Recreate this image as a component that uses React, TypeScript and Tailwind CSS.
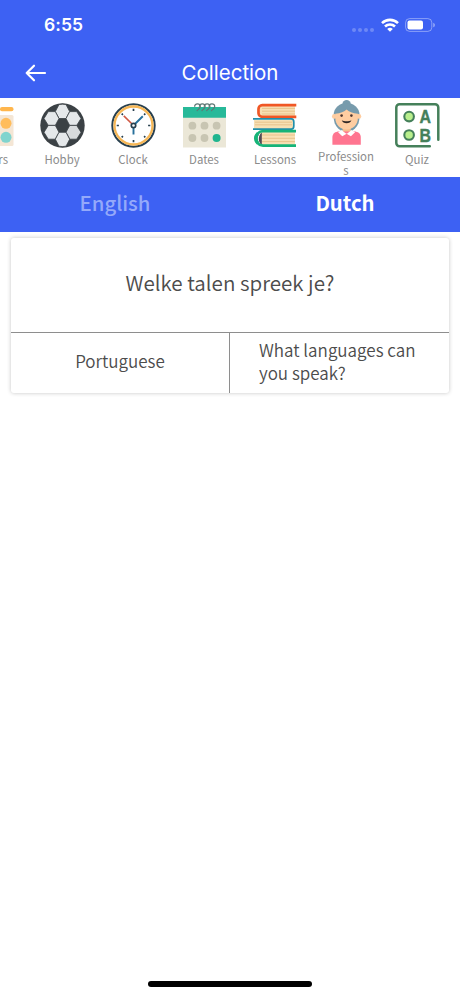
import { useState } from "react";
import type { ReactNode } from "react";

const SoccerIcon = () => (
  <svg viewBox="0 0 45 45" className="size-[45px] shrink-0">
    <circle cx="22.5" cy="22.5" r="22.2" fill="#3b4145" />
    <g fill="#e5e8ea" stroke="#3b4145" strokeWidth="0.8">
      <path d="M19 1.6Q22.5 .8 26 1.6L29.7 8.6 26 15.5H19L15.3 8.6Z" />
      <path d="M8.3 8.6h7l3.7 6.9-3.7 6.9h-7L4 15.5Z" />
      <path d="M29.7 8.6h7l4.3 6.9-4.3 6.9h-7L26 15.5Z" />
      <path d="M8.3 22.4h7l3.7 6.9-3.7 6.9h-7L4 29.3Z" />
      <path d="M29.7 22.4h7l4.3 6.9-4.3 6.9h-7L26 29.3Z" fill="#d8dbdd" />
      <path d="M19 29.3h7l3.7 6.9-3.7 7Q22.5 44 19 43.2l-3.7-7Z" />
    </g>
  </svg>
);

const ClockIcon = () => (
  <svg viewBox="0 0 45 45" className="size-[45px] shrink-0" fill="none">
    <circle cx="22.5" cy="22.5" r="21.2" fill="#fff" stroke="#28404f" strokeWidth="2" />
    <circle cx="22.5" cy="22.5" r="19" stroke="#f6b756" strokeWidth="2.3" />
    <path
      d="M22.5 5.7v2.2M22.5 37.1v2.2M5.7 22.5h2.2M37.1 22.5h2.2M10.7 10.7l1.2 1.2M33.1 33.1l1.2 1.2M33.1 11.9l1.2-1.2M10.7 34.3l1.2-1.2"
      stroke="#28404f"
      strokeWidth="1.7"
    />
    <path d="m20.8 20.8-8-7.9" stroke="#d05843" strokeWidth="1.6" />
    <path d="m24.2 20.7 7.6-7.5M22.5 24.7v6.9" stroke="#27709b" strokeWidth="1.9" />
    <circle cx="22.5" cy="22.5" r="2.2" fill="#fff" stroke="#28404f" strokeWidth="1.7" />
  </svg>
);

const CalendarIcon = () => (
  <svg viewBox="0 0 45 45" className="size-[45px] shrink-0">
    <path d="M1 13h43v31.5H1z" fill="#ebe7d7" />
    <path d="M1 4h43v10.7H1z" fill="#27b999" />
    <g fill="#c8c5b2">
      <circle cx="10.4" cy="22.7" r="3.9" />
      <circle cx="22.5" cy="22.7" r="3.9" />
      <circle cx="34.6" cy="22.7" r="3.9" />
      <circle cx="10.4" cy="35" r="3.9" />
      <circle cx="22.5" cy="35" r="3.9" />
    </g>
    <circle cx="34.6" cy="35" r="4" fill="#20b58e" />
    <g fill="none" stroke="#5f7775" strokeWidth="1.2">
      <path d="M12.6 3.8c0-3.8 6-3.8 5.7-.2-.3 2.6-2.9 2.4-3.4 4.6" />
      <path d="M17.4 3.8c0-3.8 6-3.8 5.7-.2-.3 2.6-2.9 2.4-3.4 4.6" />
      <path d="M22.2 3.8c0-3.8 6-3.8 5.7-.2-.3 2.6-2.9 2.4-3.4 4.6" />
      <path d="M27 3.8c0-3.8 6-3.8 5.7-.2-.3 2.6-2.9 2.4-3.4 4.6" />
    </g>
  </svg>
);

const BooksIcon = () => (
  <svg viewBox="0 0 45 45" className="size-[45px] shrink-0" fill="none">
    <path d="M7 3h35v11H7z" fill="#f8e0b4" />
    <path d="M1 17h39v9H1z" fill="#f8e0b4" />
    <path d="M7 29h35v13H7z" fill="#f8e0b4" />
    <path
      d="M9 5.4h33M9 8.2h33M9 11h33M2 19.2h37M2 21.8h37M9 32h33M9 35.3h33M9 38.6h33"
      stroke="#e3bb82"
      strokeWidth=".8"
    />
    <path d="M43.3 2.2H9.3a3.8 3.8 0 0 0-3.8 3.8v4.2a3.8 3.8 0 0 0 3.8 3.6h34" stroke="#f05725" strokeWidth="2.7" />
    <path d="M0 15.9h38.3c1.8 0 2.5 1.5 2.5 3v4c0 1.8-.7 3.2-2.5 3.2H0" stroke="#218fab" strokeWidth="1.7" />
    <path d="M8.8 29.4C4.8 32 4.8 39.6 8.8 42Z" fill="#514b56" />
    <path d="M43 28.1H10c-8.8 0-8.8 14.5 0 14.5h33" stroke="#16b478" strokeWidth="2.8" />
    <path d="M4.9 30.5c-3 3-3 7.2 0 9.7" stroke="#16b478" strokeWidth="3.4" />
  </svg>
);

const PersonIcon = () => (
  <svg viewBox="0 0 45 45" className="size-[45px] shrink-0">
    <circle cx="22.6" cy="4.2" r="4.2" fill="#779bac" />
    <path d="M9.6 15.5C9.6-1.2 35.6-1.2 35.6 15.5c0 6-1.4 10-4.6 13l-2.5 2H16.7l-2.5-2c-3.2-3-4.6-7-4.6-13Z" fill="#779bac" />
    <path d="M18.7 26h8v8.3l-4 3-4-3Z" fill="#f6bd8e" />
    <circle cx="10.3" cy="16.4" r="2.4" fill="#ffcda1" />
    <circle cx="34.9" cy="16.4" r="2.4" fill="#ffcda1" />
    <path d="M11.3 13.8c5.2-.8 9.2-2.2 11.3-4.4 2 2.2 6.1 3.6 11.3 4.4v4c0 15.5-22.6 15.5-22.6 0Z" fill="#ffcda1" />
    <path d="M8.4 44.7v-7.2c0-4 2.7-6 6.7-6h15c4 0 6.7 2 6.7 6v7.2Z" fill="#ff7590" />
    <path d="M17.7 30.2 22.6 34l4.9-3.8 3.6 2-4.2 4-4.3-2.4-4.3 2.4-4.2-4Z" fill="#fff" />
    <circle cx="17.6" cy="15.6" r="1.3" fill="#4d3833" />
    <circle cx="27.4" cy="15.6" r="1.3" fill="#4d3833" />
    <path d="M17.8 20.3c2.4 1.3 7.2 1.3 9.6 0-.8 3.9-8.8 3.9-9.6 0Z" fill="#302826" />
  </svg>
);

const QuizIcon = () => (
  <svg viewBox="0 0 45 45" className="size-[45px] shrink-0" fill="none">
    <path
      d="M34.8 43.3H4.5a3.2 3.2 0 0 1-3.2-3.2V4.5a3.2 3.2 0 0 1 3.2-3.2h35.6a3.2 3.2 0 0 1 3.2 3.2v32.3"
      stroke="#45805a"
      strokeWidth="2.5"
      strokeLinecap="round"
    />
    <g fill="#b9ef8d" stroke="#45805a" strokeWidth="2.1">
      <circle cx="14.1" cy="13.6" r="4.8" />
      <circle cx="14.1" cy="32" r="4.8" />
    </g>
    <g
      fill="#45805a"
      stroke="#45805a"
      strokeWidth=".4"
      className="font-['Liberation_Sans',sans-serif] text-[19px] font-bold"
      textAnchor="middle"
    >
      <text x="30.2" y="20.3" textLength="11.5" lengthAdjust="spacingAndGlyphs">A</text>
      <text x="30.2" y="38.9" textLength="11.5" lengthAdjust="spacingAndGlyphs">B</text>
    </g>
  </svg>
);

const ColorsIcon = () => (
  <svg viewBox="0 0 45 45" className="size-[45px] shrink-0">
    <rect x="31" y="4" width="13.5" height="4.2" rx="2" fill="#ffb64d" />
    <rect x="22" y="12" width="22.5" height="31" rx="1.5" fill="#f4e6d5" />
    <circle cx="37" cy="20.3" r="5.5" fill="#ffbd5c" />
    <circle cx="37" cy="34.3" r="5.5" fill="#80d4ce" />
  </svg>
);

const categories: { label: string; icon: ReactNode }[] = [
  { label: "Colors", icon: <ColorsIcon /> },
  { label: "Hobby", icon: <SoccerIcon /> },
  { label: "Clock", icon: <ClockIcon /> },
  { label: "Dates", icon: <CalendarIcon /> },
  { label: "Lessons", icon: <BooksIcon /> },
  { label: "Professions", icon: <PersonIcon /> },
  { label: "Quiz", icon: <QuizIcon /> },
];

const StatusBar = () => (
  <div className="flex h-[50px] items-center justify-between pl-[44px] pr-[24px] text-white">
    <span className="pt-px font-[Inter,sans-serif] text-[17.5px] font-semibold tracking-[0.1px]">6:55</span>
    <div className="flex items-center">
      <div className="mr-[7px] mt-[9px] flex gap-[2px]">
        {[0, 1, 2, 3].map((i) => (
          <span key={i} className="size-1 rounded-full bg-white/25" />
        ))}
      </div>
      <svg viewBox="0 0 18 14" className="mr-[6px] h-[14px] w-[18px]" fill="none" stroke="#fff" strokeWidth="2.6">
        <path d="M1 5.1a11.5 11.5 0 0 1 16 0" />
        <path d="M4 8.5a7.2 7.2 0 0 1 10 0" />
        <path d="M9 13.8 6.2 11a4 4 0 0 1 5.6 0Z" fill="#fff" stroke="none" />
      </svg>
      <svg viewBox="0 0 31 14" className="h-[14px] w-[31px]">
        <rect x=".6" y=".6" width="26.2" height="12.8" rx="4" fill="none" stroke="#fff" strokeOpacity=".4" />
        <rect x="2.5" y="2.5" width="15.5" height="9" rx="2" fill="#fff" />
        <path d="M28.3 4.7c2 .8 2 3.8 0 4.6Z" fill="#fff" fillOpacity=".5" />
      </svg>
    </div>
  </div>
);

const Header = () => (
  <header className="grid h-[46px] grid-cols-[70px_1fr_70px] items-center text-white">
    <button aria-label="Back" className="pl-[25px]">
      <svg viewBox="0 0 22 18" className="h-[18px] w-[22px]" fill="none" stroke="currentColor" strokeWidth="2.2" strokeLinecap="round" strokeLinejoin="round">
        <path d="M20 9H1.7M9 1.7 1.7 9 9 16.3" />
      </svg>
    </button>
    <h1 className="text-center font-[Inter,sans-serif] text-[20.5px]">Collection</h1>
  </header>
);

const tabs = ["English", "Dutch"];

export default function App() {
  const [active, setActive] = useState("Dutch");

  return (
    <div className="flex h-[996px] w-[460px] flex-col overflow-hidden bg-white font-['Noto_Sans_CJK_JP',sans-serif]">
      <div className="h-[98px] shrink-0 bg-[#3d61f3]">
        <StatusBar />
        <Header />
      </div>

      <nav className="flex h-[79px] shrink-0 overflow-hidden">
        <div className="-ml-[44.5px] flex">
          {categories.map((c) => (
            <button
              key={c.label}
              className={`flex w-[71px] shrink-0 flex-col items-center ${c.label === "Professions" ? "pt-[2px]" : "pt-[5px]"}`}
            >
              {c.icon}
              <span className="mt-[4px] w-[59px] text-center text-[11.4px] leading-[14px] text-[#8b8b8b] [overflow-wrap:anywhere]">
                {c.label}
              </span>
            </button>
          ))}
        </div>
      </nav>

      <div className="grid h-[55px] shrink-0 grid-cols-2 bg-[#3d61f3]">
        {tabs.map((t) => (
          <button
            key={t}
            onClick={() => setActive(t)}
            className={`pb-1.5 text-[20.3px] leading-[30px] ${t === active ? "font-bold text-white" : "font-medium text-[#94a9fa]"}`}
          >
            {t}
          </button>
        ))}
      </div>

      <main className="flex-1 px-[11px] pt-[6px]">
        <section className="overflow-hidden rounded-[3px] bg-white text-[#4c4c4c] shadow-[0_0_4px_rgba(0,0,0,0.23)]">
          <div className="flex h-[95px] items-center justify-center border-b border-[#8e8e8e] pb-[5px] text-[20.6px] font-[350]">
            Welke talen spreek je?
          </div>
          <div className="grid h-[60px] grid-cols-2 text-[17px] leading-[23px] font-[350]">
            <div className="flex items-center justify-center border-r border-[#8e8e8e] pb-[5px]">Portuguese</div>
            <div className="flex items-center pb-[5px] pl-[29px] pr-6">What languages can you speak?</div>
          </div>
        </section>
      </main>

      <div className="mx-auto mb-[9px] h-[6px] w-[164px] shrink-0 rounded-full bg-black" />
    </div>
  );
}
